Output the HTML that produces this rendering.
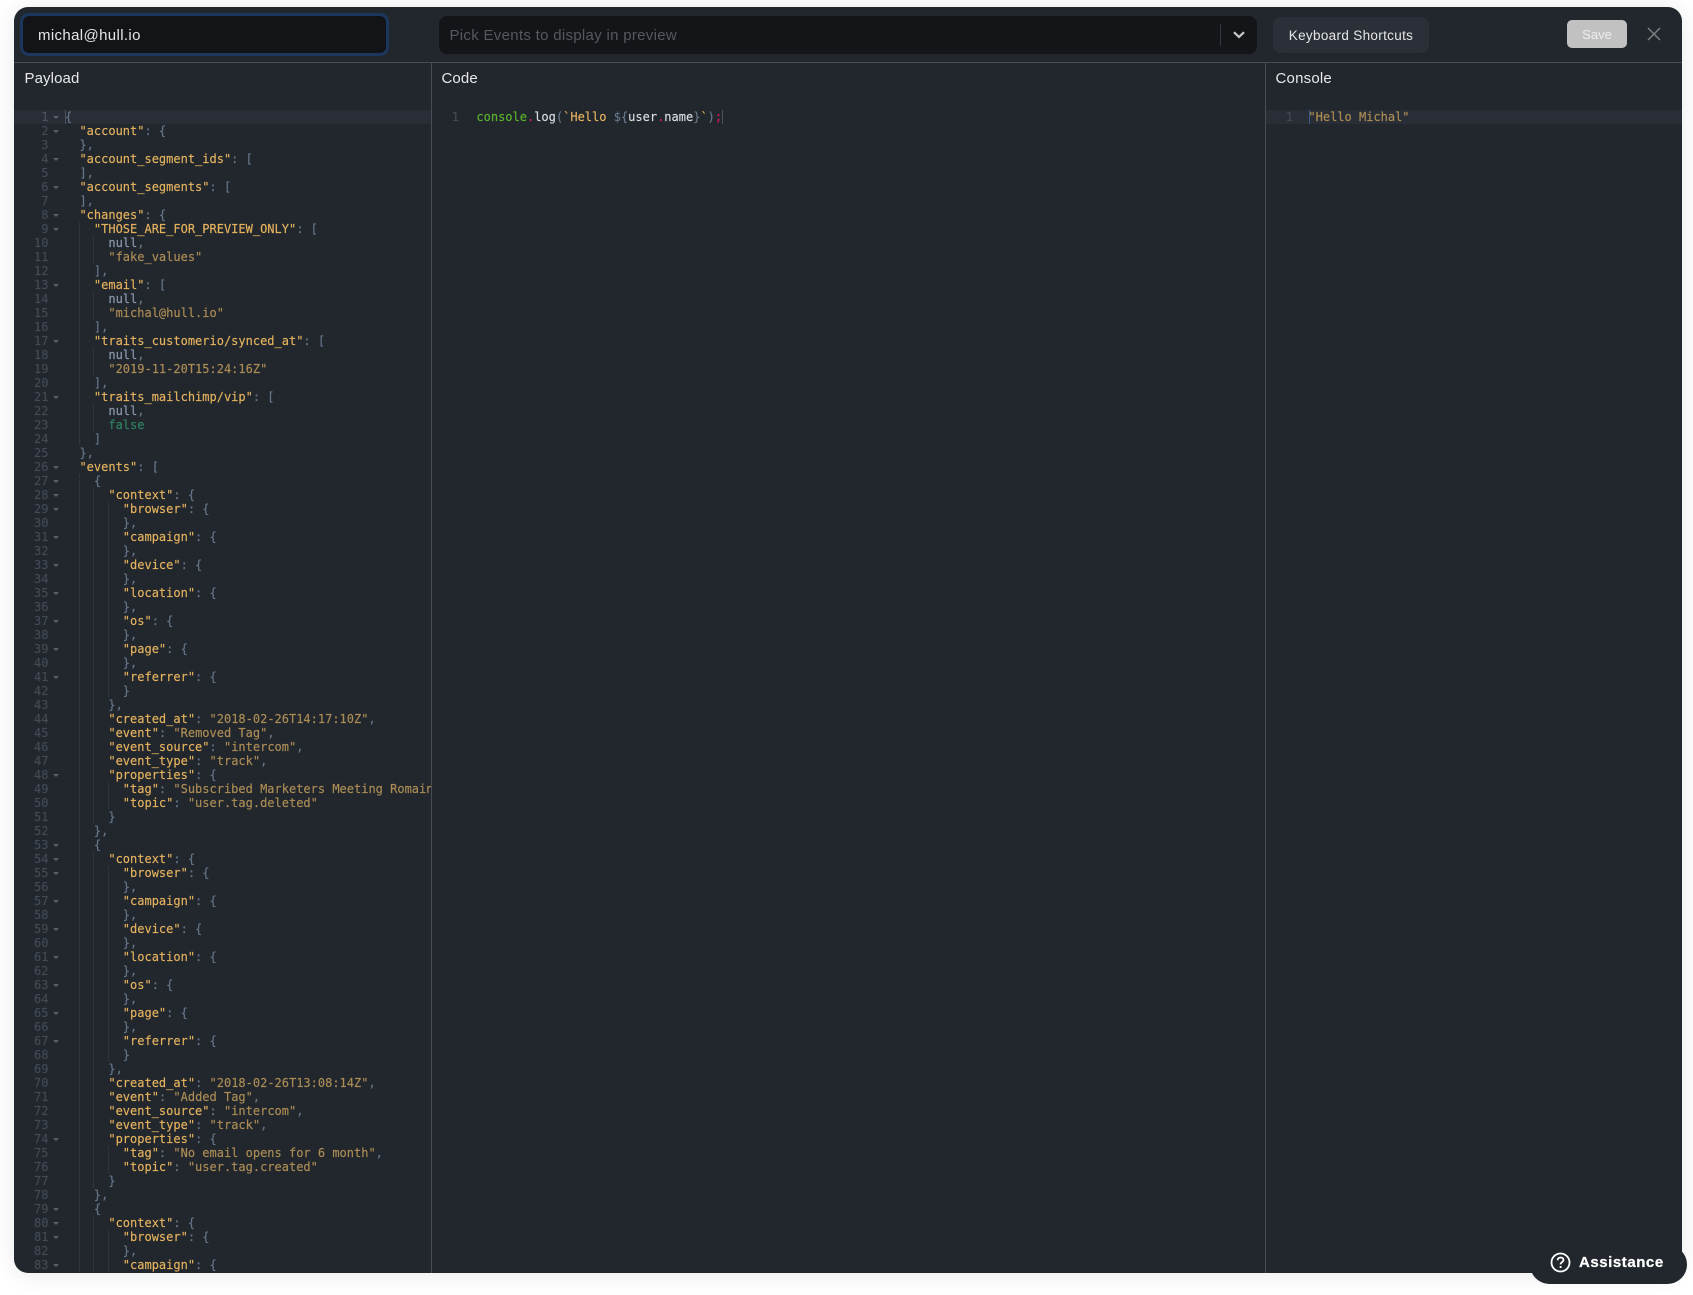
<!DOCTYPE html>
<html><head><meta charset="utf-8"><title>Processor</title>
<style>
*{box-sizing:border-box}
html,body{margin:0;width:1693px;height:1295px;background:#fff;overflow:hidden}
body{position:relative;font-family:"Liberation Sans",sans-serif}
#app{position:absolute;left:14px;top:7px;width:1668px;height:1266px;background:#22272e;border-radius:14px;overflow:hidden}
#sh{position:absolute;left:14px;top:7px;width:1668px;height:1266px;border-radius:14px;box-shadow:0 2px 24px rgba(0,0,0,.09)}
.abs{position:absolute}
#input{left:20px;top:13px;width:369px;height:43px;background:#121418;border:3px solid #1c375e;border-radius:9px;color:#e6e6e6;font-size:15px;letter-spacing:.36px;line-height:39px;padding-left:15px}
#sel{left:439px;top:16px;width:818px;height:38px;background:#131518;border-radius:8px;color:#55585d;font-size:15px;letter-spacing:.3px;line-height:40px;padding-left:10.5px}
#sep{left:1220px;top:24px;width:1px;height:22px;background:#34373c}
#kb{left:1273px;top:17px;width:156px;height:36px;background:#2a2f38;border-radius:8px;color:#e6e6e6;font-size:13.5px;letter-spacing:.33px;line-height:38px;text-align:center}
#save{left:1567px;top:20px;width:60px;height:28px;background:#c1c1c1;border-radius:5px;color:#eee;font-size:13px;line-height:29px;text-align:center}
#hl{left:14px;top:62px;width:1668px;height:1px;background:#484c53}
.v{top:62px;width:1px;height:1211px;background:#484c53}
.t{top:70px;color:#e8e8e8;font-size:15px;line-height:18px;letter-spacing:.1px}
.band{top:110px;height:14px;background:#292e36}
.m{font-family:"DejaVu Sans Mono","Liberation Mono",monospace;font-size:12px;line-height:14px;color:#66768a;-webkit-text-stroke:.15px}
#gut{left:14px;top:110px;width:34.5px;text-align:right;color:#434a55;height:1163px}
#gut div{position:relative;height:14px;white-space:pre}
#gut .f:after{content:"";position:absolute;left:38.7px;top:6px;border:3px solid transparent;border-top:3.4px solid #5a5f68;border-bottom:0}
#gut div:first-child{color:#4d5460}
#code{left:65px;top:110px;width:366px;height:1163px;overflow:hidden}
#code div{height:14px;white-space:pre}
b{font-weight:normal;color:#e5b35e}
i{font-style:normal;color:#ac8d55}
em{font-style:normal;color:#8d9baf}
u{text-decoration:none;color:#2f8360}
.g1,.g2,.g3{background-repeat:no-repeat;background-size:1px 100%}
.g1{background-image:repeating-linear-gradient(#3b414b 0 1px,transparent 1px 2px);background-position:14px 0}
.g2{background-image:repeating-linear-gradient(#3b414b 0 1px,transparent 1px 2px),repeating-linear-gradient(#3b414b 0 1px,transparent 1px 2px);background-position:14px 0,28px 0}
.g3{background-image:repeating-linear-gradient(#3b414b 0 1px,transparent 1px 2px),repeating-linear-gradient(#3b414b 0 1px,transparent 1px 2px),repeating-linear-gradient(#3b414b 0 1px,transparent 1px 2px);background-position:14px 0,28px 0,43px 0}
#cur{left:65px;top:110px;width:1px;height:14px;background:#4b5361}
#ass{left:1530px;top:1245px;width:157px;height:39px;background:#22272e;border-radius:20px;color:#fff;font-weight:bold;font-size:15px;letter-spacing:.55px;line-height:35px;padding-left:49px;-webkit-text-stroke:.25px #fff}
</style></head>
<body>
<div id="sh" class="abs"></div>
<div id="app" class="abs"></div>
<div id="input" class="abs">michal@hull.io</div>
<div id="sel" class="abs">Pick Events to display in preview</div>
<div id="sep" class="abs"></div>
<svg class="abs" style="left:1232px;top:30px" width="14" height="10" viewBox="0 0 14 10"><path d="M2 2.2L7 7L12 2.2" fill="none" stroke="#c8c8c8" stroke-width="2.2"/></svg>
<div id="kb" class="abs">Keyboard Shortcuts</div>
<div id="save" class="abs">Save</div>
<svg class="abs" style="left:1646px;top:26px" width="16" height="16" viewBox="0 0 16 16"><path d="M2 2L14 14M14 2L2 14" fill="none" stroke="#7d7f82" stroke-width="1.5"/></svg>
<div id="hl" class="abs"></div>
<div class="abs v" style="left:431px"></div>
<div class="abs v" style="left:1265px"></div>
<div class="abs t" style="left:24.5px">Payload</div>
<div class="abs t" style="left:441.5px">Code</div>
<div class="abs t" style="left:1275.5px;letter-spacing:.2px">Console</div>
<div class="abs band" style="left:14px;width:417px"></div>
<div class="abs band" style="left:1266px;width:416px"></div>
<div id="cur" class="abs"></div>
<div id="gut" class="abs m"><div class="f">1</div><div class="f">2</div><div>3</div><div class="f">4</div><div>5</div><div class="f">6</div><div>7</div><div class="f">8</div><div class="f">9</div><div>10</div><div>11</div><div>12</div><div class="f">13</div><div>14</div><div>15</div><div>16</div><div class="f">17</div><div>18</div><div>19</div><div>20</div><div class="f">21</div><div>22</div><div>23</div><div>24</div><div>25</div><div class="f">26</div><div class="f">27</div><div class="f">28</div><div class="f">29</div><div>30</div><div class="f">31</div><div>32</div><div class="f">33</div><div>34</div><div class="f">35</div><div>36</div><div class="f">37</div><div>38</div><div class="f">39</div><div>40</div><div class="f">41</div><div>42</div><div>43</div><div>44</div><div>45</div><div>46</div><div>47</div><div class="f">48</div><div>49</div><div>50</div><div>51</div><div>52</div><div class="f">53</div><div class="f">54</div><div class="f">55</div><div>56</div><div class="f">57</div><div>58</div><div class="f">59</div><div>60</div><div class="f">61</div><div>62</div><div class="f">63</div><div>64</div><div class="f">65</div><div>66</div><div class="f">67</div><div>68</div><div>69</div><div>70</div><div>71</div><div>72</div><div>73</div><div class="f">74</div><div>75</div><div>76</div><div>77</div><div>78</div><div class="f">79</div><div class="f">80</div><div class="f">81</div><div>82</div><div class="f">83</div></div>
<div id="code" class="abs m">
<div>{</div>
<div>  <b>"account"</b>: {</div>
<div>  },</div>
<div>  <b>"account_segment_ids"</b>: [</div>
<div>  ],</div>
<div>  <b>"account_segments"</b>: [</div>
<div>  ],</div>
<div>  <b>"changes"</b>: {</div>
<div class="g1">    <b>"THOSE_ARE_FOR_PREVIEW_ONLY"</b>: [</div>
<div class="g2">      <em>null</em>,</div>
<div class="g2">      <i>"fake_values"</i></div>
<div class="g1">    ],</div>
<div class="g1">    <b>"email"</b>: [</div>
<div class="g2">      <em>null</em>,</div>
<div class="g2">      <i>"michal@hull.io"</i></div>
<div class="g1">    ],</div>
<div class="g1">    <b>"traits_customerio/synced_at"</b>: [</div>
<div class="g2">      <em>null</em>,</div>
<div class="g2">      <i>"2019-11-20T15:24:16Z"</i></div>
<div class="g1">    ],</div>
<div class="g1">    <b>"traits_mailchimp/vip"</b>: [</div>
<div class="g2">      <em>null</em>,</div>
<div class="g2">      <u>false</u></div>
<div class="g1">    ]</div>
<div>  },</div>
<div>  <b>"events"</b>: [</div>
<div class="g1">    {</div>
<div class="g2">      <b>"context"</b>: {</div>
<div class="g3">        <b>"browser"</b>: {</div>
<div class="g3">        },</div>
<div class="g3">        <b>"campaign"</b>: {</div>
<div class="g3">        },</div>
<div class="g3">        <b>"device"</b>: {</div>
<div class="g3">        },</div>
<div class="g3">        <b>"location"</b>: {</div>
<div class="g3">        },</div>
<div class="g3">        <b>"os"</b>: {</div>
<div class="g3">        },</div>
<div class="g3">        <b>"page"</b>: {</div>
<div class="g3">        },</div>
<div class="g3">        <b>"referrer"</b>: {</div>
<div class="g3">        }</div>
<div class="g2">      },</div>
<div class="g2">      <b>"created_at"</b>: <i>"2018-02-26T14:17:10Z"</i>,</div>
<div class="g2">      <b>"event"</b>: <i>"Removed Tag"</i>,</div>
<div class="g2">      <b>"event_source"</b>: <i>"intercom"</i>,</div>
<div class="g2">      <b>"event_type"</b>: <i>"track"</i>,</div>
<div class="g2">      <b>"properties"</b>: {</div>
<div class="g3">        <b>"tag"</b>: <i>"Subscribed Marketers Meeting Romain"</i>,</div>
<div class="g3">        <b>"topic"</b>: <i>"user.tag.deleted"</i></div>
<div class="g2">      }</div>
<div class="g1">    },</div>
<div class="g1">    {</div>
<div class="g2">      <b>"context"</b>: {</div>
<div class="g3">        <b>"browser"</b>: {</div>
<div class="g3">        },</div>
<div class="g3">        <b>"campaign"</b>: {</div>
<div class="g3">        },</div>
<div class="g3">        <b>"device"</b>: {</div>
<div class="g3">        },</div>
<div class="g3">        <b>"location"</b>: {</div>
<div class="g3">        },</div>
<div class="g3">        <b>"os"</b>: {</div>
<div class="g3">        },</div>
<div class="g3">        <b>"page"</b>: {</div>
<div class="g3">        },</div>
<div class="g3">        <b>"referrer"</b>: {</div>
<div class="g3">        }</div>
<div class="g2">      },</div>
<div class="g2">      <b>"created_at"</b>: <i>"2018-02-26T13:08:14Z"</i>,</div>
<div class="g2">      <b>"event"</b>: <i>"Added Tag"</i>,</div>
<div class="g2">      <b>"event_source"</b>: <i>"intercom"</i>,</div>
<div class="g2">      <b>"event_type"</b>: <i>"track"</i>,</div>
<div class="g2">      <b>"properties"</b>: {</div>
<div class="g3">        <b>"tag"</b>: <i>"No email opens for 6 month"</i>,</div>
<div class="g3">        <b>"topic"</b>: <i>"user.tag.created"</i></div>
<div class="g2">      }</div>
<div class="g1">    },</div>
<div class="g1">    {</div>
<div class="g2">      <b>"context"</b>: {</div>
<div class="g3">        <b>"browser"</b>: {</div>
<div class="g3">        },</div>
<div class="g3">        <b>"campaign"</b>: {</div>
</div>
<div class="abs m" style="left:448.5px;top:110px;width:10.5px;text-align:right;color:#434a55">1</div>
<div class="abs m" style="left:476.4px;top:110px;white-space:pre"><span style="color:#5ab52c">console</span><span style="color:#d81b60">.</span><span style="color:#d9dde2">log</span>(<b>`Hello </b>${<span style="color:#d9dde2">user</span><span style="color:#d81b60">.</span><span style="color:#d9dde2">name</span>}<b>`</b>)<span style="color:#d81b60">;</span></div>
<div class="abs" style="left:722px;top:110px;width:1px;height:14px;background:#4b5361"></div>
<div class="abs m" style="left:1282.5px;top:110px;width:10.5px;text-align:right;color:#434a55">1</div>
<div class="abs m" style="left:1308.4px;top:110px;white-space:pre"><i>"Hello Michal"</i></div>
<div class="abs" style="left:1309px;top:110px;width:1px;height:14px;background:#3a5a8a"></div>
<div id="ass" class="abs">Assistance</div>
<svg class="abs" style="left:1550px;top:1252px" width="21" height="21" viewBox="0 0 21 21"><circle cx="10.5" cy="10.5" r="9" fill="none" stroke="#fff" stroke-width="1.8"/><path d="M7.6 8.2C7.6 6.5 9 5.5 10.6 5.5C12.3 5.5 13.5 6.6 13.5 8C13.5 10 10.6 10.2 10.6 12.4" fill="none" stroke="#fff" stroke-width="1.8"/><circle cx="10.6" cy="15" r="1.1" fill="#fff"/></svg>
</body></html>
